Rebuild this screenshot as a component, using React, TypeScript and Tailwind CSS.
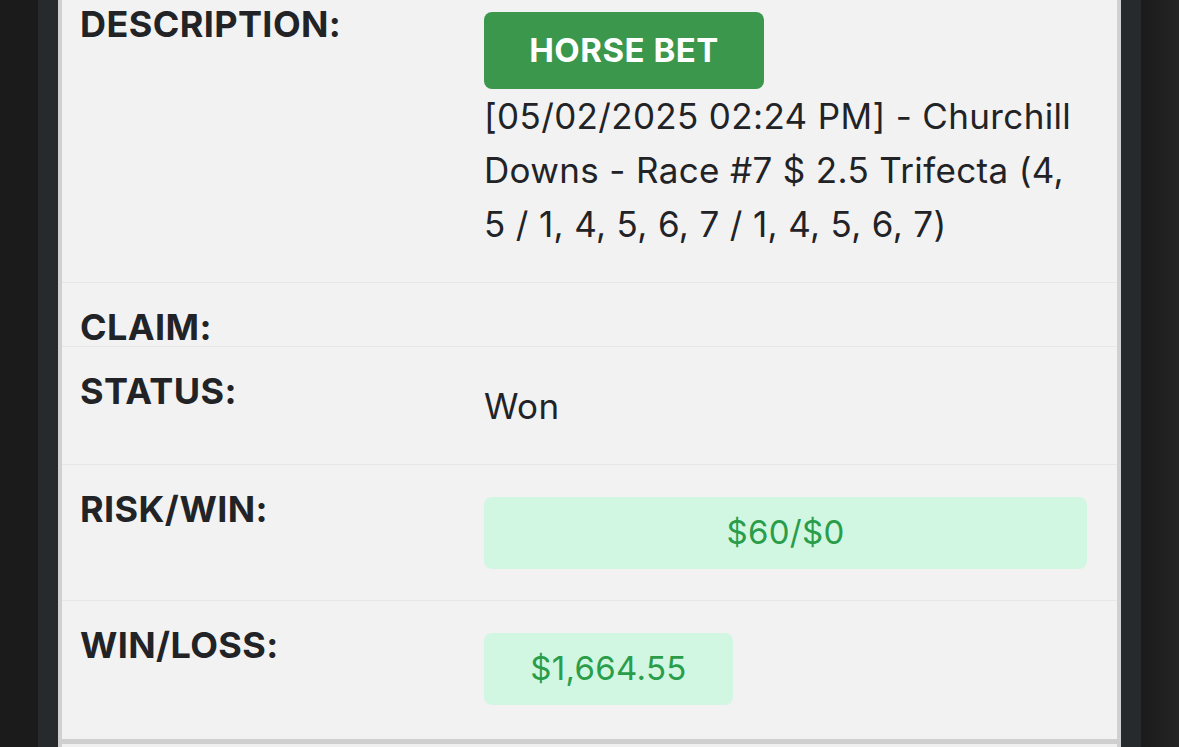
const rows = [
  { label: "CLAIM:" },
];

function Row({ label, children, last }: { label: string; children?: React.ReactNode; last?: boolean }) {
  return (
    <div className={`grid grid-cols-[404px_1fr] pt-6 pl-[18px] ${last ? "" : "border-b border-[#e7e7e7]"}`}>
      <div className="pt-[2px] text-[36px] leading-[37px] font-bold tracking-[0.4px] text-[#222326]">{label}</div>
      <div className="mt-2 pb-[31px] pr-[30px]">{children}</div>
    </div>
  );
}

function Money({ value, full }: { value: string; full?: boolean }) {
  return (
    <div
      className={`h-[72px] rounded-lg bg-[#d1f7e3] text-[#2a9d4a] text-[33px] tracking-[0.3px] flex items-center justify-center ${
        full ? "w-full" : "w-[249px]"
      }`}
    >
      {value}
    </div>
  );
}

export default function App() {
  return (
    <div className="w-[1179px] h-[747px] overflow-hidden bg-[#1b1b1b] flex" style={{ fontFamily: "Inter, 'Noto Sans', sans-serif" }}>
      <div className="w-[38px] shrink-0" />
      <div className="w-[1103px] shrink-0 bg-[#272a2d] px-5">
        <div className="bg-[#f2f2f2] border-x-4 border-[#d0d0d2] border-b-[5px] border-b-[#cfcfcf] pb-[3px] -mt-5">
          <Row label="DESCRIPTION:">
            <div className="h-[77px] w-[280px] rounded-lg bg-[#3a974b] text-white font-bold text-[33px] tracking-[0.5px] flex items-center justify-center">
              HORSE BET
            </div>
            <p className="text-[35px] leading-[54px] tracking-[0.35px] text-[#222326]">
              [05/02/2025 02:24 PM] - Churchill Downs - Race #7 $ 2.5 Trifecta (4, 5 / 1, 4, 5, 6, 7 / 1, 4, 5, 6, 7)
            </p>
          </Row>
          {rows.map((r) => (
            <Row key={r.label} label={r.label} />
          ))}
          <Row label="STATUS:">
            <p className="text-[35px] leading-[54px] tracking-[0.35px] text-[#222326]">Won</p>
          </Row>
          <Row label="RISK/WIN:">
            <Money value="$60/$0" full />
          </Row>
          <Row label="WIN/LOSS:" last>
            <Money value="$1,664.55" />
          </Row>
        </div>
        <div className="bg-[#f0f0f0] border-x-4 border-[#d0d0d2] h-10" />
      </div>
      <div className="flex-1 bg-gradient-to-r from-[#1b1b1b] to-[#242424]" />
    </div>
  );
}
